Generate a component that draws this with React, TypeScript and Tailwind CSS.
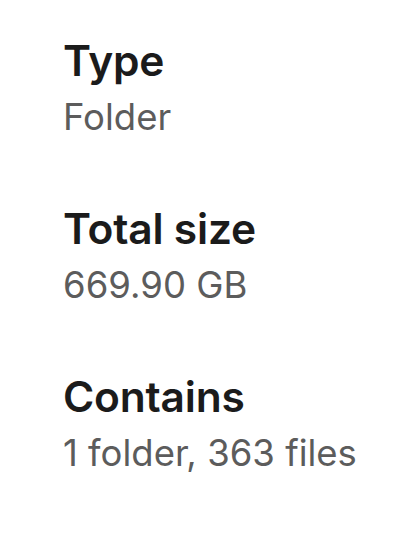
const details = [
  { label: "Type", value: "Folder" },
  { label: "Total size", value: "669.90 GB" },
  { label: "Contains", value: "1 folder, 363 files" },
];

export default function App() {
  return (
    <div className="min-h-[534px] w-[400px] bg-white pl-[63px] pt-[35px] font-['Inter',sans-serif]">
      <div className="flex flex-col gap-[64px]">
        {details.map((d) => (
          <div key={d.label} className="flex flex-col gap-2 whitespace-nowrap">
            <div className="text-[42.5px] leading-[52px] font-semibold tracking-[-0.2px] text-[#1b1b1b]">
              {d.label}
            </div>
            <div className="text-[36.5px] leading-[44px] text-[#5c5c5c]">
              {d.value}
            </div>
          </div>
        ))}
      </div>
    </div>
  );
}
